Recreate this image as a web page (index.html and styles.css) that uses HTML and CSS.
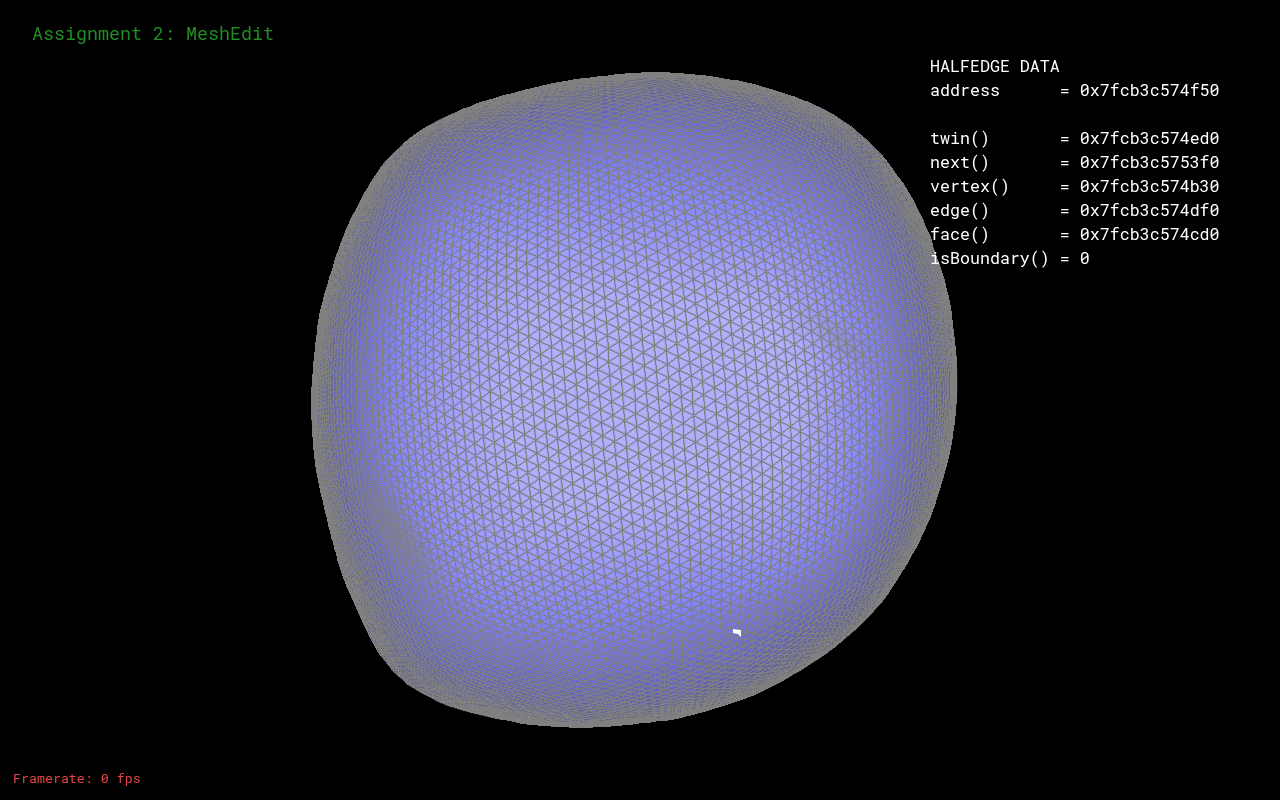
FILE: index.html
```html
<!DOCTYPE html>
<html lang="en">
<head>
  <meta charset="UTF-8">
  <title>Assignment 2: MeshEdit</title>
  <link rel="stylesheet" href="styles.css">
</head>
<body>

  <div class="viewer">
    <canvas id="mesh" width="1280" height="800"></canvas>
    <h1 class="title">Assignment 2: MeshEdit</h1>
    <pre class="info">HALFEDGE DATA
address      = 0x7fcb3c574f50

twin()       = 0x7fcb3c574ed0
next()       = 0x7fcb3c5753f0
vertex()     = 0x7fcb3c574b30
edge()       = 0x7fcb3c574df0
face()       = 0x7fcb3c574cd0
isBoundary() = 0</pre>
    <div class="framerate">Framerate: 0 fps</div>
  </div>

  <script src="mesh.js"></script>
</body>
</html>
```

FILE: styles.css
```css
html, body {
  margin: 0;
  height: 100%;
  background: #000;
  overflow: hidden;
}
.viewer {
  position: relative;
  width: 1280px;
  height: 800px;
  font-family: "Roboto Mono", "DejaVu Sans Mono", "Liberation Mono", monospace;
}
#mesh {
  display: block;
}
.title {
  position: absolute;
  left: 32px;
  top: 21px;
  margin: 0;
  font-size: 18.33px;
  font-weight: 400;
  line-height: 24px;
  color: #228b22;
  white-space: pre;
}
.info {
  position: absolute;
  left: 930px;
  top: 54px;
  margin: 0;
  font-family: inherit;
  font-size: 16.65px;
  line-height: 24px;
  color: #fff;
}
.framerate {
  position: absolute;
  left: 13px;
  top: 769px;
  font-size: 13.3px;
  line-height: 18px;
  color: #e64646;
  white-space: pre;
}
```

FILE: mesh.js
```js
const canvas = document.getElementById('mesh');
const ctx = canvas.getContext('2d');

// silhouette of the mesh, clockwise from the top
const outline = [
  [645, 72], [700, 75], [760, 85], [830, 110], [880, 150], [920, 210], [948, 290],
  [958, 380], [950, 450], [925, 530], [880, 605], [830, 650], [760, 692], [680, 718],
  [590, 728], [530, 725], [450, 708], [400, 682], [375, 650], [340, 570], [316, 470],
  [311, 400], [320, 310], [345, 230], [380, 165], [420, 128], [480, 102], [560, 82]
];
const cx = 635, cy = 400;
const STEPS = 720;

function rayHit(angle) {
  const dx = Math.cos(angle), dy = Math.sin(angle);
  let best = 0;
  for (let i = 0; i < outline.length; i++) {
    const a = outline[i], b = outline[(i + 1) % outline.length];
    const ex = b[0] - a[0], ey = b[1] - a[1];
    const det = dx * ey - dy * ex;
    if (Math.abs(det) < 1e-9) continue;
    const ax = a[0] - cx, ay = a[1] - cy;
    const t = (ax * ey - ay * ex) / det;
    const u = (ax * dy - ay * dx) / det;
    if (t > 0 && u >= 0 && u <= 1) best = Math.max(best, t);
  }
  return best;
}

let radii = [];
for (let i = 0; i < STEPS; i++) radii.push(rayHit(i / STEPS * Math.PI * 2));
// round off the polygon corners
for (let pass = 0; pass < 3; pass++) {
  const next = [];
  for (let i = 0; i < STEPS; i++) {
    let sum = 0;
    for (let k = -6; k <= 6; k++) sum += radii[(i + k + STEPS) % STEPS];
    next.push(sum / 13);
  }
  radii = next;
}

function rim(angle) {
  let f = angle / (Math.PI * 2) * STEPS;
  f = ((f % STEPS) + STEPS) % STEPS;
  const i = Math.floor(f);
  return radii[i] + (radii[(i + 1) % STEPS] - radii[i]) * (f - i);
}

function gauss(x, y, gx, gy, sx, sy, rot) {
  const c = Math.cos(rot), s = Math.sin(rot);
  const a = ((x - gx) * c + (y - gy) * s) / sx;
  const b = (-(x - gx) * s + (y - gy) * c) / sy;
  return Math.exp(-(a * a + b * b));
}

const rgStops = [[0, 72], [0.5, 105], [0.8, 148], [1, 176]];

function redGreen(n) {
  for (let i = 1; i < rgStops.length; i++) {
    if (n <= rgStops[i][0]) {
      const a = rgStops[i - 1], b = rgStops[i];
      return a[1] + (b[1] - a[1]) * (n - a[0]) / (b[0] - a[0]);
    }
  }
  return rgStops[rgStops.length - 1][1];
}

function shade(x, y, q) {
  // q is 0 in the middle, 1 on the rim
  let n = Math.sqrt(Math.max(0, 1 - q * q));
  n += 0.09 * gauss(x, y, 560, 410, 170, 140, 0);
  n += 0.14 * gauss(x, y, 770, 400, 70, 120, 0);
  n -= 0.08 * gauss(x, y, 640, 610, 170, 70, 0);
  n -= 0.08 * gauss(x, y, 690, 200, 170, 70, 0);
  n = Math.min(1, Math.max(0, n));
  const c = redGreen(n);
  const b = Math.min(255, 105 + 215 * n);
  // the creases are so dense with edges that they read as grey
  const grey = Math.min(0.6,
    0.6 * gauss(x, y, 395, 530, 60, 16, 0.95) +
    0.3 * gauss(x, y, 840, 340, 40, 12, 0.7));
  return [c + (128 - c) * grey, c + (128 - c) * grey, b + (128 - b) * grey];
}

const base = ctx.createImageData(1280, 800);
for (let y = 0; y < 800; y++) {
  for (let x = 0; x < 1280; x++) {
    const i = (y * 1280 + x) * 4;
    const dx = x + 0.5 - cx, dy = y + 0.5 - cy;
    const q = Math.hypot(dx, dy) / rim(Math.atan2(dy, dx));
    base.data[i + 3] = 255;
    if (q >= 1) continue;
    const c = shade(x, y, q);
    base.data[i] = c[0];
    base.data[i + 1] = c[1];
    base.data[i + 2] = c[2];
  }
}
ctx.putImageData(base, 0, 0);

// triangle lattice, wrapped over the front of the blob
const SIDE = 13.4;
const TILT = 0.45;
const MAX_D = 680;
const R0 = 325;
const BEND = 0.25;

function project(a, b) {
  const d = Math.hypot(a, b);
  if (d > MAX_D) return null;
  const angle = Math.atan2(b, a);
  const t = d / MAX_D;
  const radius = R0 + (rim(angle) - R0) * t * t;
  const r = radius * Math.sin(Math.PI / 2 * (t - BEND * t * t * t) / (1 - BEND));
  return [cx + Math.cos(angle) * r, cy + Math.sin(angle) * r];
}

function vertex(i, j) {
  const a = (i + j / 2) * SIDE, b = j * SIDE * Math.sqrt(3) / 2;
  const c = Math.cos(TILT), s = Math.sin(TILT);
  return project(a * c - b * s, a * s + b * c);
}

const edges = [];
const N = Math.ceil(MAX_D / SIDE * 1.3);
for (let i = -N; i <= N; i++) {
  for (let j = -N; j <= N; j++) {
    const p = vertex(i, j);
    if (!p) continue;
    [[1, 0], [0, 1], [-1, 1]].forEach(o => {
      const r = vertex(i + o[0], j + o[1]);
      if (r) edges.push([p[0], p[1], r[0], r[1]]);
    });
  }
}

// soft halo on the longer edges only, the short ones would just fog up
ctx.strokeStyle = 'rgba(128, 128, 128, 0.4)';
ctx.lineWidth = 2;
ctx.beginPath();
edges.forEach(e => {
  if (Math.hypot(e[2] - e[0], e[3] - e[1]) < 7) return;
  ctx.moveTo(e[0], e[1]);
  ctx.lineTo(e[2], e[3]);
});
ctx.stroke();

// wireframe goes in without antialiasing, like the GL lines it stands for
const frame = ctx.getImageData(0, 0, 1280, 800);

function plot(x, y) {
  const i = (y * 1280 + x) * 4;
  frame.data[i] = frame.data[i + 1] = frame.data[i + 2] = 128;
}

function line(e) {
  let x0 = Math.floor(e[0]), y0 = Math.floor(e[1]);
  const x1 = Math.floor(e[2]), y1 = Math.floor(e[3]);
  const dx = Math.abs(x1 - x0), dy = -Math.abs(y1 - y0);
  const sx = x0 < x1 ? 1 : -1, sy = y0 < y1 ? 1 : -1;
  let err = dx + dy;
  while (true) {
    plot(x0, y0);
    if (x0 === x1 && y0 === y1) break;
    const e2 = 2 * err;
    if (e2 >= dy) { err += dy; x0 += sx; }
    if (e2 <= dx) { err += dx; y0 += sy; }
  }
}

// thin out the rim a bit so the blue still shows through the flecks
edges.forEach((e, i) => {
  const len = Math.hypot(e[2] - e[0], e[3] - e[1]);
  if (len < 5 && i % 3 === 0) return;
  line(e);
});
ctx.putImageData(frame, 0, 0);

// selected halfedge
ctx.fillStyle = '#fff';
ctx.beginPath();
ctx.moveTo(733, 629);
ctx.lineTo(741, 630);
ctx.lineTo(741, 637);
ctx.lineTo(738, 634);
ctx.lineTo(733, 633);
ctx.closePath();
ctx.fill();
```
